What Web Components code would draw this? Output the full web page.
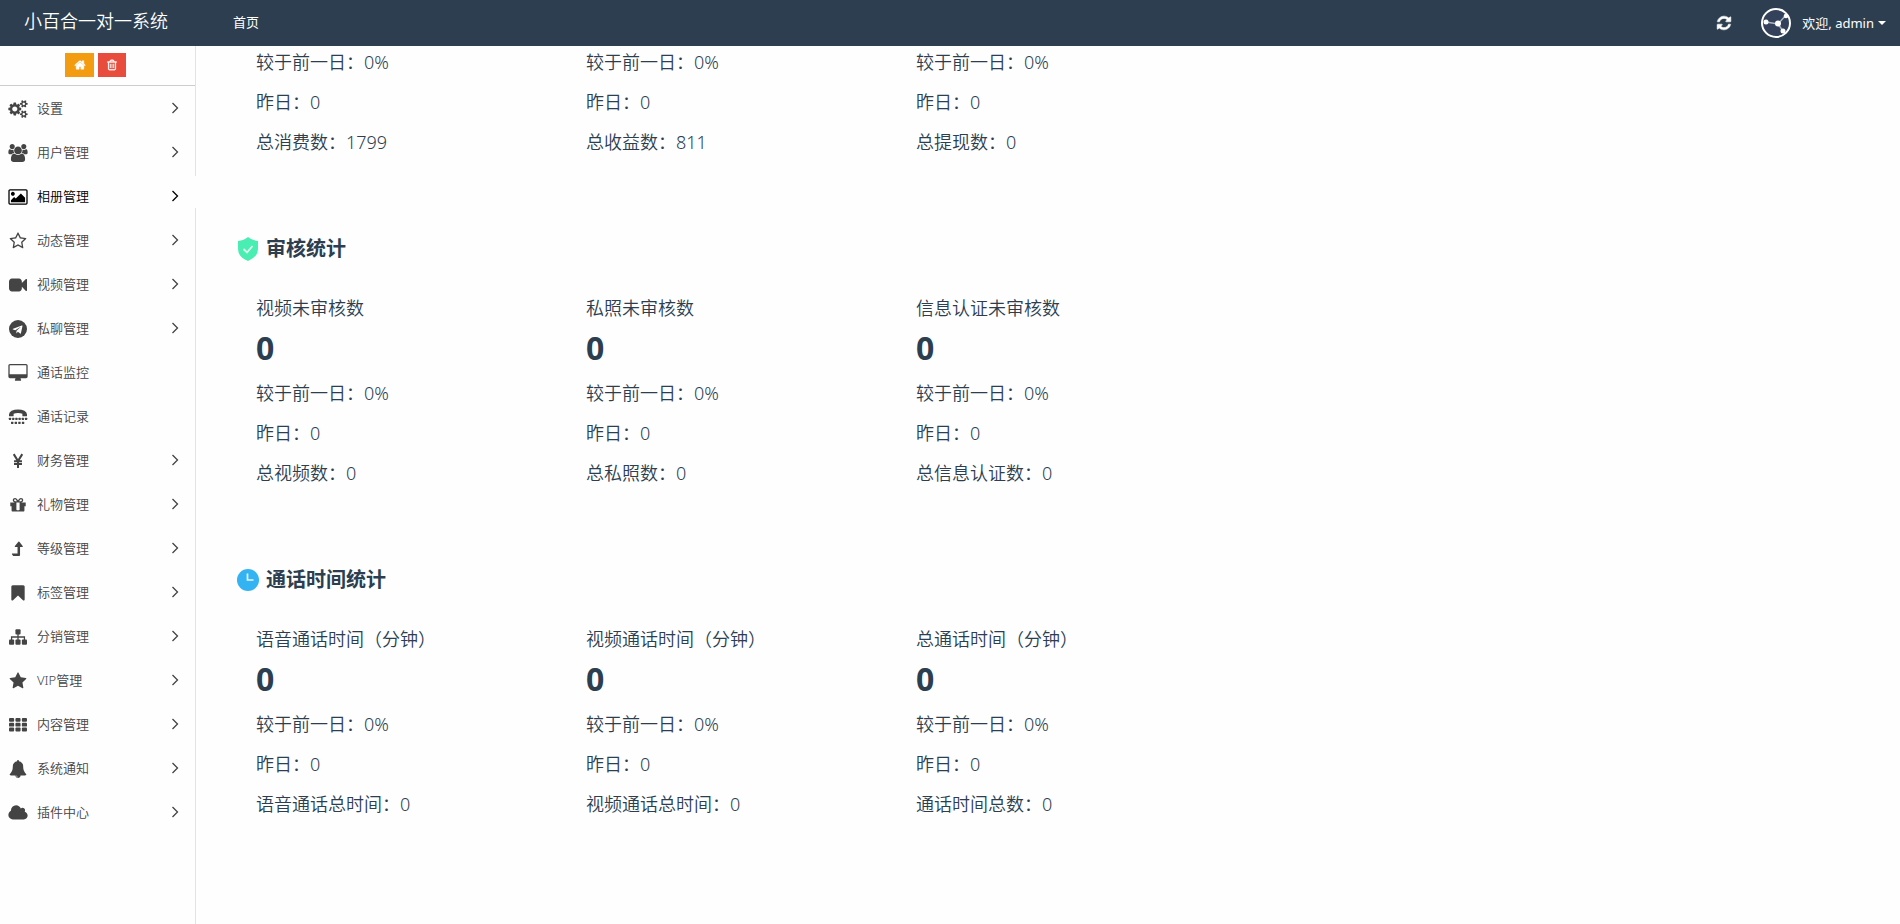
<!DOCTYPE html>
<html lang="zh-CN">
<head>
<meta charset="utf-8">
<title>小百合一对一系统</title>
<style>
html, body { margin: 0; min-height: 100%; background: #fefefe; }
body { font-family: "Noto Sans", "Noto Sans CJK SC", sans-serif; color: #2c3e50; }
</style>
</head>
<body>
<admin-shell>
  <admin-header slot="header" brand="小百合一对一系统" user="admin"><a href="#home">首页</a></admin-header>
  <side-menu slot="side">
    <menu-item icon="cogs" arrow>设置</menu-item>
    <menu-item icon="users" arrow>用户管理</menu-item>
    <menu-item icon="image" arrow active>相册管理</menu-item>
    <menu-item icon="star-o" arrow>动态管理</menu-item>
    <menu-item icon="video" arrow>视频管理</menu-item>
    <menu-item icon="telegram" arrow>私聊管理</menu-item>
    <menu-item icon="desktop">通话监控</menu-item>
    <menu-item icon="tty">通话记录</menu-item>
    <menu-item icon="yen" arrow>财务管理</menu-item>
    <menu-item icon="gift" arrow>礼物管理</menu-item>
    <menu-item icon="level-up" arrow>等级管理</menu-item>
    <menu-item icon="bookmark" arrow>标签管理</menu-item>
    <menu-item icon="sitemap" arrow>分销管理</menu-item>
    <menu-item icon="star" arrow>VIP管理</menu-item>
    <menu-item icon="th" arrow>内容管理</menu-item>
    <menu-item icon="bell" arrow>系统通知</menu-item>
    <menu-item icon="cloud" arrow>插件中心</menu-item>
  </side-menu>
  <stat-section>
    <stat-card total="总消费数：1799"></stat-card>
    <stat-card total="总收益数：811"></stat-card>
    <stat-card total="总提现数：0"></stat-card>
  </stat-section>
  <stat-section heading="审核统计" icon="shield">
    <stat-card label="视频未审核数" total="总视频数：0"></stat-card>
    <stat-card label="私照未审核数" total="总私照数：0"></stat-card>
    <stat-card label="信息认证未审核数" total="总信息认证数：0"></stat-card>
  </stat-section>
  <stat-section heading="通话时间统计" icon="clock">
    <stat-card label="语音通话时间（分钟）" total="语音通话总时间：0"></stat-card>
    <stat-card label="视频通话时间（分钟）" total="视频通话总时间：0"></stat-card>
    <stat-card label="总通话时间（分钟）" total="通话时间总数：0"></stat-card>
  </stat-section>
</admin-shell>
<script>
const STAR = 'M1728 647q0 22-26 48l-363 354 86 500q1 7 1 20 0 21-10.5 35.5t-30.5 14.5q-19 0-40-12l-449-236-449 236q-22 12-40 12-21 0-31.5-14.5t-10.5-35.5q0-6 2-20l86-500-364-354q-25-27-25-48 0-37 56-46l502-73 225-455q19-41 49-41t49 41l225 455 502 73q56 9 56 46z';
const SMALL_COG = 'v140q0 16-149 31-12 27-30 52 51 113 51 138 0 4-4 7-122 71-124 71-8 0-46-47t-52-68q-20 2-30 2t-30-2q-14 21-52 68t-46 47q-2 0-124-71-4-3-4-7 0-25 51-138-18-25-30-52-149-15-149-31v-140q0-16 149-31 13-29 30-52-51-113-51-138 0-4 4-7 4-2 35-20t59-34 30-16q8 0 46 46.5t52 67.5q20-2 30-2t30 2q51-71 92-112l6-2q4 0 124 70 4 3 4 7 0 25-51 138 17 23 30 52 149 15 149 31z';
const p = (d, extra = '') => `<path d="${d}" ${extra}/>`;
const rects = (list) => list.map(([x, y, w, h, r]) => `<rect x="${x}" y="${y}" width="${w}" height="${h}" rx="${r}"/>`).join('');
const grid = [];
for (const y of [192, 672, 1152]) for (const x of [0, 640, 1280]) grid.push([x, y, 512, 384, 96]);
const keys = [];
for (const x of [0, 320, 640, 960, 1280, 1600]) keys.push([x - 10, 980, 220, 220, 40]);
for (const x of [200, 560, 920, 1280]) keys.push([x, 1360, 240, 230, 40]);

/* name: [viewBox, markup] */
const ICONS = {
  cogs: ['0 0 1920 1792', p('M896 896q0-106-75-181t-181-75-181 75-75 181 75 181 181 75 181-75 75-181zm768 512q0-52-38-90t-90-38-90 38-38 90q0 53 37.5 90.5t90.5 37.5 90.5-37.5 37.5-90.5zm0-1024q0-52-38-90t-90-38-90 38-38 90q0 53 37.5 90.5t90.5 37.5 90.5-37.5 37.5-90.5zm-384 421v185q0 10-7 19.5t-16 10.5l-155 24q-11 35-32 76 34 48 90 115 7 11 7 20 0 12-7 19-23 30-82.5 89.5t-78.5 59.5q-11 0-21-7l-115-90q-37 19-77 31-11 108-23 155-7 24-30 24h-186q-11 0-20-7.5t-10-17.5l-23-153q-34-10-75-31l-118 89q-7 7-20 7-11 0-21-8-144-133-144-160 0-9 7-19 10-14 41-53t47-61q-23-44-35-82l-152-24q-10-1-17-9.5t-7-19.5v-185q0-10 7-19.5t16-10.5l155-24q11-35 32-76-34-48-90-115-7-11-7-20 0-12 7-20 22-30 82-89t79-59q11 0 21 7l115 90q34-18 77-32 11-108 23-154 7-24 30-24h186q11 0 20 7.5t10 17.5l23 153q34 10 75 31l118-89q8-7 20-7 11 0 21 8 144 133 144 160 0 8-7 19-12 16-42 54t-45 60q23 48 34 82l152 23q10 2 17 10.5t7 19.5zm640 533' + SMALL_COG + 'm0-1024' + SMALL_COG)],
  users: ['0 0 1920 1792', p('M593 896q-162 5-265 128h-134q-82 0-138-40.5t-56-118.5q0-353 124-353 6 0 43.5 21t97.5 42.5 119 21.5q67 0 133-23-5 37-5 66 0 139 81 256zm1071 637q0 120-73 189.5t-194 69.5h-874q-121 0-194-69.5t-73-189.5q0-53 3.5-103.5t14-109 26.5-108.5 43-97.5 62-81 85.5-53.5 111.5-20q10 0 43 21.5t73 48 107 48 135 21.5 135-21.5 107-48 73-48 43-21.5q61 0 111.5 20t85.5 53.5 62 81 43 97.5 26.5 108.5 14 109 3.5 103.5zm-1024-1277q0 106-75 181t-181 75-181-75-75-181 75-181 181-75 181 75 75 181zm704 384q0 159-112.5 271.5t-271.5 112.5-271.5-112.5-112.5-271.5 112.5-271.5 271.5-112.5 271.5 112.5 112.5 271.5zm576 225q0 78-56 118.5t-138 40.5h-134q-103-123-265-128 81-117 81-256 0-29-5-66 66 23 133 23 59 0 119-21.5t97.5-42.5 43.5-21q124 0 124 353zm-128-609q0 106-75 181t-181 75-181-75-75-181 75-181 181-75 181 75 75 181z')],
  image: ['-64 0 1920 1792', p('M576 576q0 80-56 136t-136 56-136-56-56-136 56-136 136-56 136 56 56 136zm1024 384v448h-1408v-192l320-320 160 160 512-512zm96-704h-1600q-13 0-22.5 9.5t-9.5 22.5v1216q0 13 9.5 22.5t22.5 9.5h1600q13 0 22.5-9.5t9.5-22.5v-1216q0-13-9.5-22.5t-22.5-9.5zm160 32v1216q0 66-47 113t-113 47h-1600q-66 0-113-47t-47-113v-1216q0-66 47-113t113-47h1600q66 0 113 47t47 113z')],
  'star-o': ['-64 0 1920 1792', p('M1201 1004l306-297-422-62-189-382-189 382-422 62 306 297-73 421 378-199 377 199zm527-357q0 22-26 48l-363 354 86 500q1 7 1 20 0 50-41 50-19 0-40-12l-449-236-449 236q-22 12-40 12-21 0-31.5-14.5t-10.5-35.5q0-6 2-20l86-500-364-354q-25-27-25-48 0-37 56-46l502-73 225-455q19-41 49-41t49 41l225 455 502 73q56 9 56 46z')],
  star: ['-64 0 1920 1792', p(STAR)],
  video: ['-64 0 1920 1792', p('M1792 352v1088q0 42-39 59-13 5-25 5-27 0-45-19l-403-403v166q0 119-84.5 203.5t-203.5 84.5h-704q-119 0-203.5-84.5t-84.5-203.5v-704q0-119 84.5-203.5t203.5-84.5h704q119 0 203.5 84.5t84.5 203.5v165l403-402q18-19 45-19 12 0 25 5 39 17 39 59z')],
  telegram: ['-64 0 1920 1792', '<circle cx="896" cy="896" r="896"/>' + p('M1189 1307l147-693q9-42-10.5-61t-50.5-7l-864 333q-29 11-39.5 25t-2.5 26.5 32 19.5l221 69 513-323q21-14 32-6 7 5-4 15l-415 375-16 228q23 0 45-22l108-104 224 165q64 36 80-40z', 'fill="#fff"')],
  desktop: ['-64 0 1920 1792', p('M1728 992v-832q0-13-9.5-22.5t-22.5-9.5h-1600q-13 0-22.5 9.5t-9.5 22.5v832q0 13 9.5 22.5t22.5 9.5h1600q13 0 22.5-9.5t9.5-22.5zm128-832v1088q0 66-47 113t-113 47h-544q0 37 16 77.5t32 71 16 43.5q0 26-19 45t-45 19h-512q-26 0-45-19t-19-45q0-14 16-44t32-70 16-78h-544q-66 0-113-47t-47-113v-1088q0-66 47-113t113-47h1600q66 0 113 47t47 113z')],
  tty: ['-64 0 1920 1792', p('M0 650q0-240 260-380 260-120 636-120t636 120q260 140 260 380v120q0 50-50 50h-360q-50 0-50-50v-190q-170-70-436-70t-436 70v190q0 50-50 50h-360q-50 0-50-50z') + rects(keys)],
  yen: ['-64 0 1920 1792', '<path d="M470 210L896 900L1322 210M896 860V1600M500 920H1292M500 1200H1292" fill="none" stroke="currentColor" stroke-width="200"/>'],
  gift: ['-64 0 1920 1792', p('M1056 1356v-716h-320v716q0 25 18 38.5t46 13.5h192q28 0 46-13.5t18-38.5zm-456-844h195l-126-161q-26-31-69-31-40 0-68 28t-28 68 28 68 68 28zm688-96q0-40-28-68t-68-28q-43 0-69 31l-125 161h194q40 0 68-28t28-68zm376 256v320q0 14-9 23t-23 9h-96v416q0 40-28 68t-68 28h-1088q-40 0-68-28t-28-68v-416h-96q-14 0-23-9t-9-23v-320q0-14 9-23t23-9h440q-93 0-158.5-65.5t-65.5-158.5 65.5-158.5 158.5-65.5q107 0 168 77l128 165 128-165q61-77 168-77 93 0 158.5 65.5t65.5 158.5-65.5 158.5-158.5 65.5h440q14 0 23 9t9 23z')],
  'level-up': ['-64 0 1920 1792', p('M1370 660q-18 42-60 42h-210v800q0 90-90 90H440q-24 0-40-20l-110-150q-20-50 20-72h540V702H640q-42 0-60-42-14-40 12-74L930 180q50-50 100 0l328 406q28 34 12 74z')],
  bookmark: ['-64 0 1920 1792', p('M1420 128q60 0 104 40 36 36 36 84v1290q0 60-50 90-60 34-120-14L896 1150l-494 468q-60 48-120 14-50-30-50-90V252q0-48 36-84 44-40 104-40z')],
  sitemap: ['-64 0 1920 1792', rects([[640, 128, 512, 512, 96], [0, 1152, 512, 512, 96], [640, 1152, 512, 512, 96], [1280, 1152, 512, 512, 96]]) + '<path d="M896 600V1200M256 1200V896H1536V1200" fill="none" stroke="currentColor" stroke-width="128"/>'],
  th: ['-64 0 1920 1792', rects(grid)],
  bell: ['-64 0 1920 1792', p('M912 1696q0-16-16-16-59 0-101.5-42.5t-42.5-101.5q0-16-16-16t-16 16q0 73 51.5 124.5t124.5 51.5q16 0 16-16zm816-288q0 52-38 90t-90 38h-448q0 106-75 181t-181 75-181-75-75-181h-448q-52 0-90-38t-38-90q50-42 91-88t85-119.5 74.5-158.5 50-206 19.5-260q0-152 117-282.5t307-158.5q-8-19-8-39 0-40 28-68t68-28 68 28 28 68q0 20-8 39 190 28 307 158.5t117 282.5q0 139 19.5 260t50 206 74.5 158.5 85 119.5 91 88z')],
  cloud: ['-64 0 1920 1792', p('M1856 1152q0 159-112.5 271.5t-271.5 112.5h-1088q-185 0-316.5-131.5t-131.5-316.5q0-132 71-241.5t187-163.5q-2-28-2-43 0-212 150-362t362-150q158 0 286.5 88t187.5 230q70-62 166-62 106 0 181 75t75 181q0 75-41 138 129 30 213 134.5t84 239.5z')],
  home: ['0 0 1792 1792', p('M1472 992v480q0 26-19 45t-45 19h-384v-384h-256v384h-384q-26 0-45-19t-19-45v-480q0-1 .5-3t.5-3l575-474 575 474q1 2 1 6zm223-69l-62 74q-8 9-21 11h-3q-13 0-21-7l-692-577-692 577q-12 8-24 7-13-2-21-11l-62-74q-8-10-7-23.5t11-21.5l719-599q32-26 76-26t76 26l244 204v-195q0-14 9-23t23-9h192q14 0 23 9t9 23v408l219 182q10 8 11 21.5t-7 23.5z', 'stroke="currentColor" stroke-width="60"')],
  trash: ['0 0 1792 1792', rects([[576, 704, 128, 640, 32], [832, 704, 128, 640, 32], [1088, 704, 128, 640, 32]]) + p('M1344 1460v-948h-896v948q0 22 7 40.5t14.5 27 10.5 8.5h832q3 0 10.5-8.5t14.5-27 7-40.5zm-672-1076h448l-48-117q-7-9-17-11h-317q-10 2-17 11zm928 32v64q0 14-9 23t-23 9h-96v948q0 83-47 143.5t-113 60.5h-832q-66 0-113-58.5t-47-141.5v-952h-96q-14 0-23-9t-9-23v-64q0-14 9-23t23-9h309l70-167q15-37 54-63t79-26h320q40 0 79 26t54 63l70 167h309q14 0 23 9t9 23z', 'stroke="currentColor" stroke-width="50"')],
  refresh: ['0 0 1792 1792', p('M1639 1056q0 5-1 7-64 268-268 434.5t-478 166.5q-146 0-282.5-55t-243.5-157l-129 129q-19 19-45 19t-45-19-19-45v-448q0-26 19-45t45-19h448q26 0 45 19t19 45-19 45l-137 137q71 66 161 102t187 36q134 0 250-65t186-179q11-17 53-117 8-23 30-23h192q13 0 22.5 9.5t9.5 22.5zm25-800v448q0 26-19 45t-45 19h-448q-26 0-45-19t-19-45 19-45l138-138q-148-137-349-137-134 0-250 65t-186 179q-11 17-53 117-8 23-30 23h-199q-13 0-22.5-9.5t-9.5-22.5v-7q65-268 270-434.5t480-166.5q146 0 284 55.5t245 156.5l130-129q19-19 45-19t45 19 19 45z', 'stroke="currentColor" stroke-width="60"')],
  arrow: ['0 0 8 12', '<path d="M1.500 1L6.500 6L1.500 11" fill="none" stroke="currentColor" stroke-width="1.3"/>'],
  caret: ['0 0 8 4', p('M0 0H8L4 4z')],
  avatar: ['0 0 30 30', '<circle cx="15" cy="15" r="14" fill="#33425a" stroke="#fff" stroke-width="2"/><path d="M5 14L17 16L25 7M17 16L22 23" fill="none" stroke="#aeb8c6" stroke-width="1.4"/><g fill="#fff"><circle cx="5" cy="14" r="2.5"/><circle cx="17" cy="15.500" r="3"/><circle cx="25" cy="8" r="2.300"/><circle cx="22" cy="23" r="2.500"/></g>'],
  shield: ['0 0 22 24', '<path d="M11 0Q15 3.500 21 4V12Q21 20 11 24Q1 20 1 12V4Q7 3.500 11 0z" fill="#4beeb2"/><path d="M6.500 12L10 15.500L15.500 9" fill="none" stroke="#dffff3" stroke-width="1.8"/>'],
  clock: ['0 0 22 24', '<circle cx="11" cy="12" r="11" fill="#33b3f2"/><path d="M10.500 5.500V12H16.500" fill="none" stroke="#e8f7ff" stroke-width="1.7"/>']
};

const define = (name, render) => customElements.define(name, class extends HTMLElement {
  connectedCallback() {
    if (!this.shadowRoot) this.attachShadow({ mode: 'open' }).innerHTML = render(this);
  }
});

define('ui-icon', (el) => {
  const [box, body] = ICONS[el.getAttribute('name')];
  return `<style>:host{display:inline-flex;flex:none}svg{display:block;width:100%;height:100%}</style>
  <svg viewBox="${box}" fill="currentColor" aria-hidden="true">${body}</svg>`;
});

define('admin-shell', () => `<style>
  :host{display:grid;grid-template:auto 1fr / 196px minmax(0,1fr);min-height:100vh}
  header{grid-column:1 / -1}
  aside{border-right:1px solid #e3e3e3}
  main{padding:4px 40px 0;display:flex;flex-direction:column;gap:79px}
  </style>
  <header><slot name="header"></slot></header>
  <aside><slot name="side"></slot></aside>
  <main><slot></slot></main>`);

define('admin-header', (el) => `<style>
  :host{display:flex;align-items:center;height:46px;background:#2c3e50;color:#fff;font-size:13px;line-height:20px}
  .brand{box-sizing:border-box;width:196px;padding:0 0 4px 24px;font-size:18px;line-height:24px;font-weight:350;color:inherit;text-decoration:none;white-space:nowrap}
  nav{flex:1;padding:0 0 2px 37px}
  ::slotted(a){color:inherit;text-decoration:none}
  button{display:flex;align-items:center;border:0;padding:0;background:none;color:inherit;font:inherit}
  .refresh{margin-right:29px}
  .refresh ui-icon{width:16px;height:16px}
  .user{padding-right:14px}
  .user .pic{width:30px;height:30px;margin-right:11px}
  .user .caret{width:8px;height:4px;margin-left:4px}
  </style>
  <a class="brand" href="#">${el.getAttribute('brand')}</a>
  <nav><slot></slot></nav>
  <button class="refresh" aria-label="刷新"><ui-icon name="refresh"></ui-icon></button>
  <button class="user"><ui-icon class="pic" name="avatar"></ui-icon><span>欢迎, ${el.getAttribute('user')}</span><ui-icon class="caret" name="caret"></ui-icon></button>`);

define('side-menu', () => `<style>
  :host{display:block}
  .tools{display:flex;gap:4px;justify-content:center;padding:7px 4px 8px 0;border-bottom:1px solid #ccc}
  button{display:flex;align-items:center;justify-content:center;width:28px;height:24px;padding:0;border:0;color:#fff}
  button ui-icon{width:12px;height:12px}
  .home{width:29px;background:#f39c12}
  .trash{background:#e74c3c}
  </style>
  <div class="tools">
    <button class="home" aria-label="首页"><ui-icon name="home"></ui-icon></button>
    <button class="trash" aria-label="清除缓存"><ui-icon name="trash"></ui-icon></button>
  </div>
  <nav><slot></slot></nav>`);

define('menu-item', (el) => `<style>
  :host{display:block;position:relative;color:#444;font-size:13px;font-weight:350}
  :host([active]){color:#000}
  :host([active])::after{content:"";position:absolute;top:2px;right:-1px;width:1px;height:32px;background:#fefefe}
  a{display:flex;align-items:center;height:44px;padding:0 16px 0 8px;color:inherit;text-decoration:none;line-height:20px}
  .icon{width:20px;height:18px;margin:2px 9px 0 0}
  .label{flex:1}
  .arrow{width:8px;height:12px}
  </style>
  <a href="#${el.getAttribute('icon')}"><ui-icon class="icon" name="${el.getAttribute('icon')}"></ui-icon>
  <span class="label"><slot></slot></span>${el.hasAttribute('arrow') ? '<ui-icon class="arrow" name="arrow"></ui-icon>' : ''}</a>`);

define('stat-section', (el) => `<style>
  :host{display:block}
  h2{display:flex;align-items:center;gap:7px;margin:0 0 31px;padding-left:1px;font-size:20px;line-height:32px;font-weight:700}
  h2 ui-icon{width:22px;height:24px}
  .cards{display:grid;grid-template-columns:repeat(3,minmax(0,330px));padding-left:20px}
  </style>
  ${el.hasAttribute('heading') ? `<h2><ui-icon name="${el.getAttribute('icon')}"></ui-icon>${el.getAttribute('heading')}</h2>` : ''}
  <div class="cards"><slot></slot></div>`);

define('stat-card', (el) => `<style>
  :host{display:block;font-size:18px;line-height:24px;font-weight:350}
  p{margin:0}
  p + p{margin-top:16px}
  strong{display:block;margin:12px 0 17px;font-size:32px;line-height:32px;font-weight:700}
  </style>
  ${el.hasAttribute('label') ? `<p>${el.getAttribute('label')}</p><strong>0</strong>` : ''}
  <p>较于前一日：0%</p><p>昨日：0</p><p>${el.getAttribute('total')}</p>`);
</script>
</body>
</html>
